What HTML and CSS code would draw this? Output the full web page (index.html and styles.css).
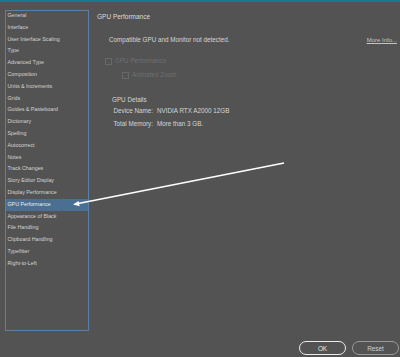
FILE: index.html
```html
<!DOCTYPE html>
<html lang="en">
<head>
  <meta charset="UTF-8" />
  <meta name="viewport" content="width=device-width, initial-scale=1.0"/>
  <title>Preferences - GPU Performance</title>
  <link rel="stylesheet" href="styles.css">
</head>
<body>
  <div class="dialogo">
    <div class="barra-topo"></div>
    <div class="corpo">
      <ul class="lista">
        <li>General</li>
        <li>Interface</li>
        <li>User Interface Scaling</li>
        <li>Type</li>
        <li>Advanced Type</li>
        <li>Composition</li>
        <li>Units &amp; Increments</li>
        <li>Grids</li>
        <li>Guides &amp; Pasteboard</li>
        <li>Dictionary</li>
        <li>Spelling</li>
        <li>Autocorrect</li>
        <li>Notes</li>
        <li>Track Changes</li>
        <li>Story Editor Display</li>
        <li>Display Performance</li>
        <li class="ativo">GPU Performance</li>
        <li>Appearance of Black</li>
        <li>File Handling</li>
        <li>Clipboard Handling</li>
        <li>Typefitter</li>
        <li>Right-to-Left</li>
      </ul>

      <section class="painel">
        <h1 class="titulo">GPU Performance</h1>
        <div class="aviso">
          <span>Compatible GPU and Monitor not detected.</span>
          <a class="mais-info">More Info...</a>
        </div>
        <label class="opcao desativada"><span class="caixa"></span>GPU Performance</label>
        <label class="opcao desativada sub"><span class="caixa"></span>Animated Zoom</label>

        <div class="detalhes">
          <h2>GPU Details</h2>
          <div class="grade">
            <span class="rotulo">Device Name:</span><span>NVIDIA RTX A2000 12GB</span>
            <span class="rotulo">Total Memory:</span><span>More than 3 GB.</span>
          </div>
        </div>
      </section>
    </div>
    <div class="rodape">
      <button class="botao padrao">OK</button>
      <button class="botao">Reset</button>
    </div>
  </div>

  <svg class="seta" width="400" height="357" viewBox="0 0 400 357">
    <line x1="284" y1="163" x2="77" y2="203.8" stroke="#fff" stroke-width="1.6"/>
    <polygon points="73,204.6 79.6,206.2 78.6,201" fill="#fff"/>
  </svg>
</body>
</html>
```

FILE: styles.css
```css
body { margin: 0; background: #535353; font-family: "Liberation Sans", Arial, sans-serif; color: #d6d6d6; }
.dialogo { display: flex; flex-direction: column; height: 357px; width: 400px; overflow: hidden; }
.barra-topo { height: 2px; background: #0f7e88; }
.corpo { display: flex; flex: 1; }

.lista { list-style: none; margin: 8px 0 0 5px; padding: 0; width: 82px; height: 319px; border: 1px solid #5b7fa6; font-size: 5.3px; }
.lista li { height: 11.8px; line-height: 11.8px; padding-left: 1.5px; white-space: nowrap; color: #d4d4d4; position: relative; top: -1px; }
.lista li.ativo { background: #4b6e93; color: #eeeeee; }

.painel { flex: 1; padding: 10px 3px 0 8px; font-size: 6.3px; }
.titulo { margin: 0; font-size: 6.5px; font-weight: normal; line-height: 10px; color: #dcdcdc; }
.aviso { display: flex; justify-content: space-between; align-items: center; margin-top: 13px; padding-left: 12px; line-height: 10px; }
.mais-info { color: #c4c4c4; text-decoration: underline; font-size: 6px; }

.opcao { display: flex; align-items: center; gap: 3px; line-height: 10px; }
.opcao.desativada { color: #6f6f6f; }
.opcao:first-of-type { margin-top: 11px; padding-left: 8px; }
.opcao.sub { margin-top: 4px; padding-left: 25px; }
.caixa { width: 5px; height: 5px; border: 1px solid #686868; }

.detalhes { margin-top: 15px; padding-left: 15px; }
.detalhes h2 { margin: 0; font-size: 6.3px; font-weight: normal; line-height: 10px; }
.grade { display: grid; grid-template-columns: 41px auto; column-gap: 4px; row-gap: 2.5px; margin-top: 1px; line-height: 10px; }
.rotulo { text-align: right; white-space: nowrap; }

.rodape { display: flex; justify-content: flex-end; gap: 6px; padding: 0 1px 2px 0; }
.botao { width: 47px; height: 14px; padding: 0; border-radius: 7px; background: transparent; border: 1px solid #9a9a9a; color: #cfcfcf; font-family: "Liberation Sans", Arial, sans-serif; font-size: 6.4px; }
.botao.padrao { border: 1.5px solid #ececec; color: #e6e6e6; }

.seta { position: absolute; left: 0; top: 0; pointer-events: none; }
```
